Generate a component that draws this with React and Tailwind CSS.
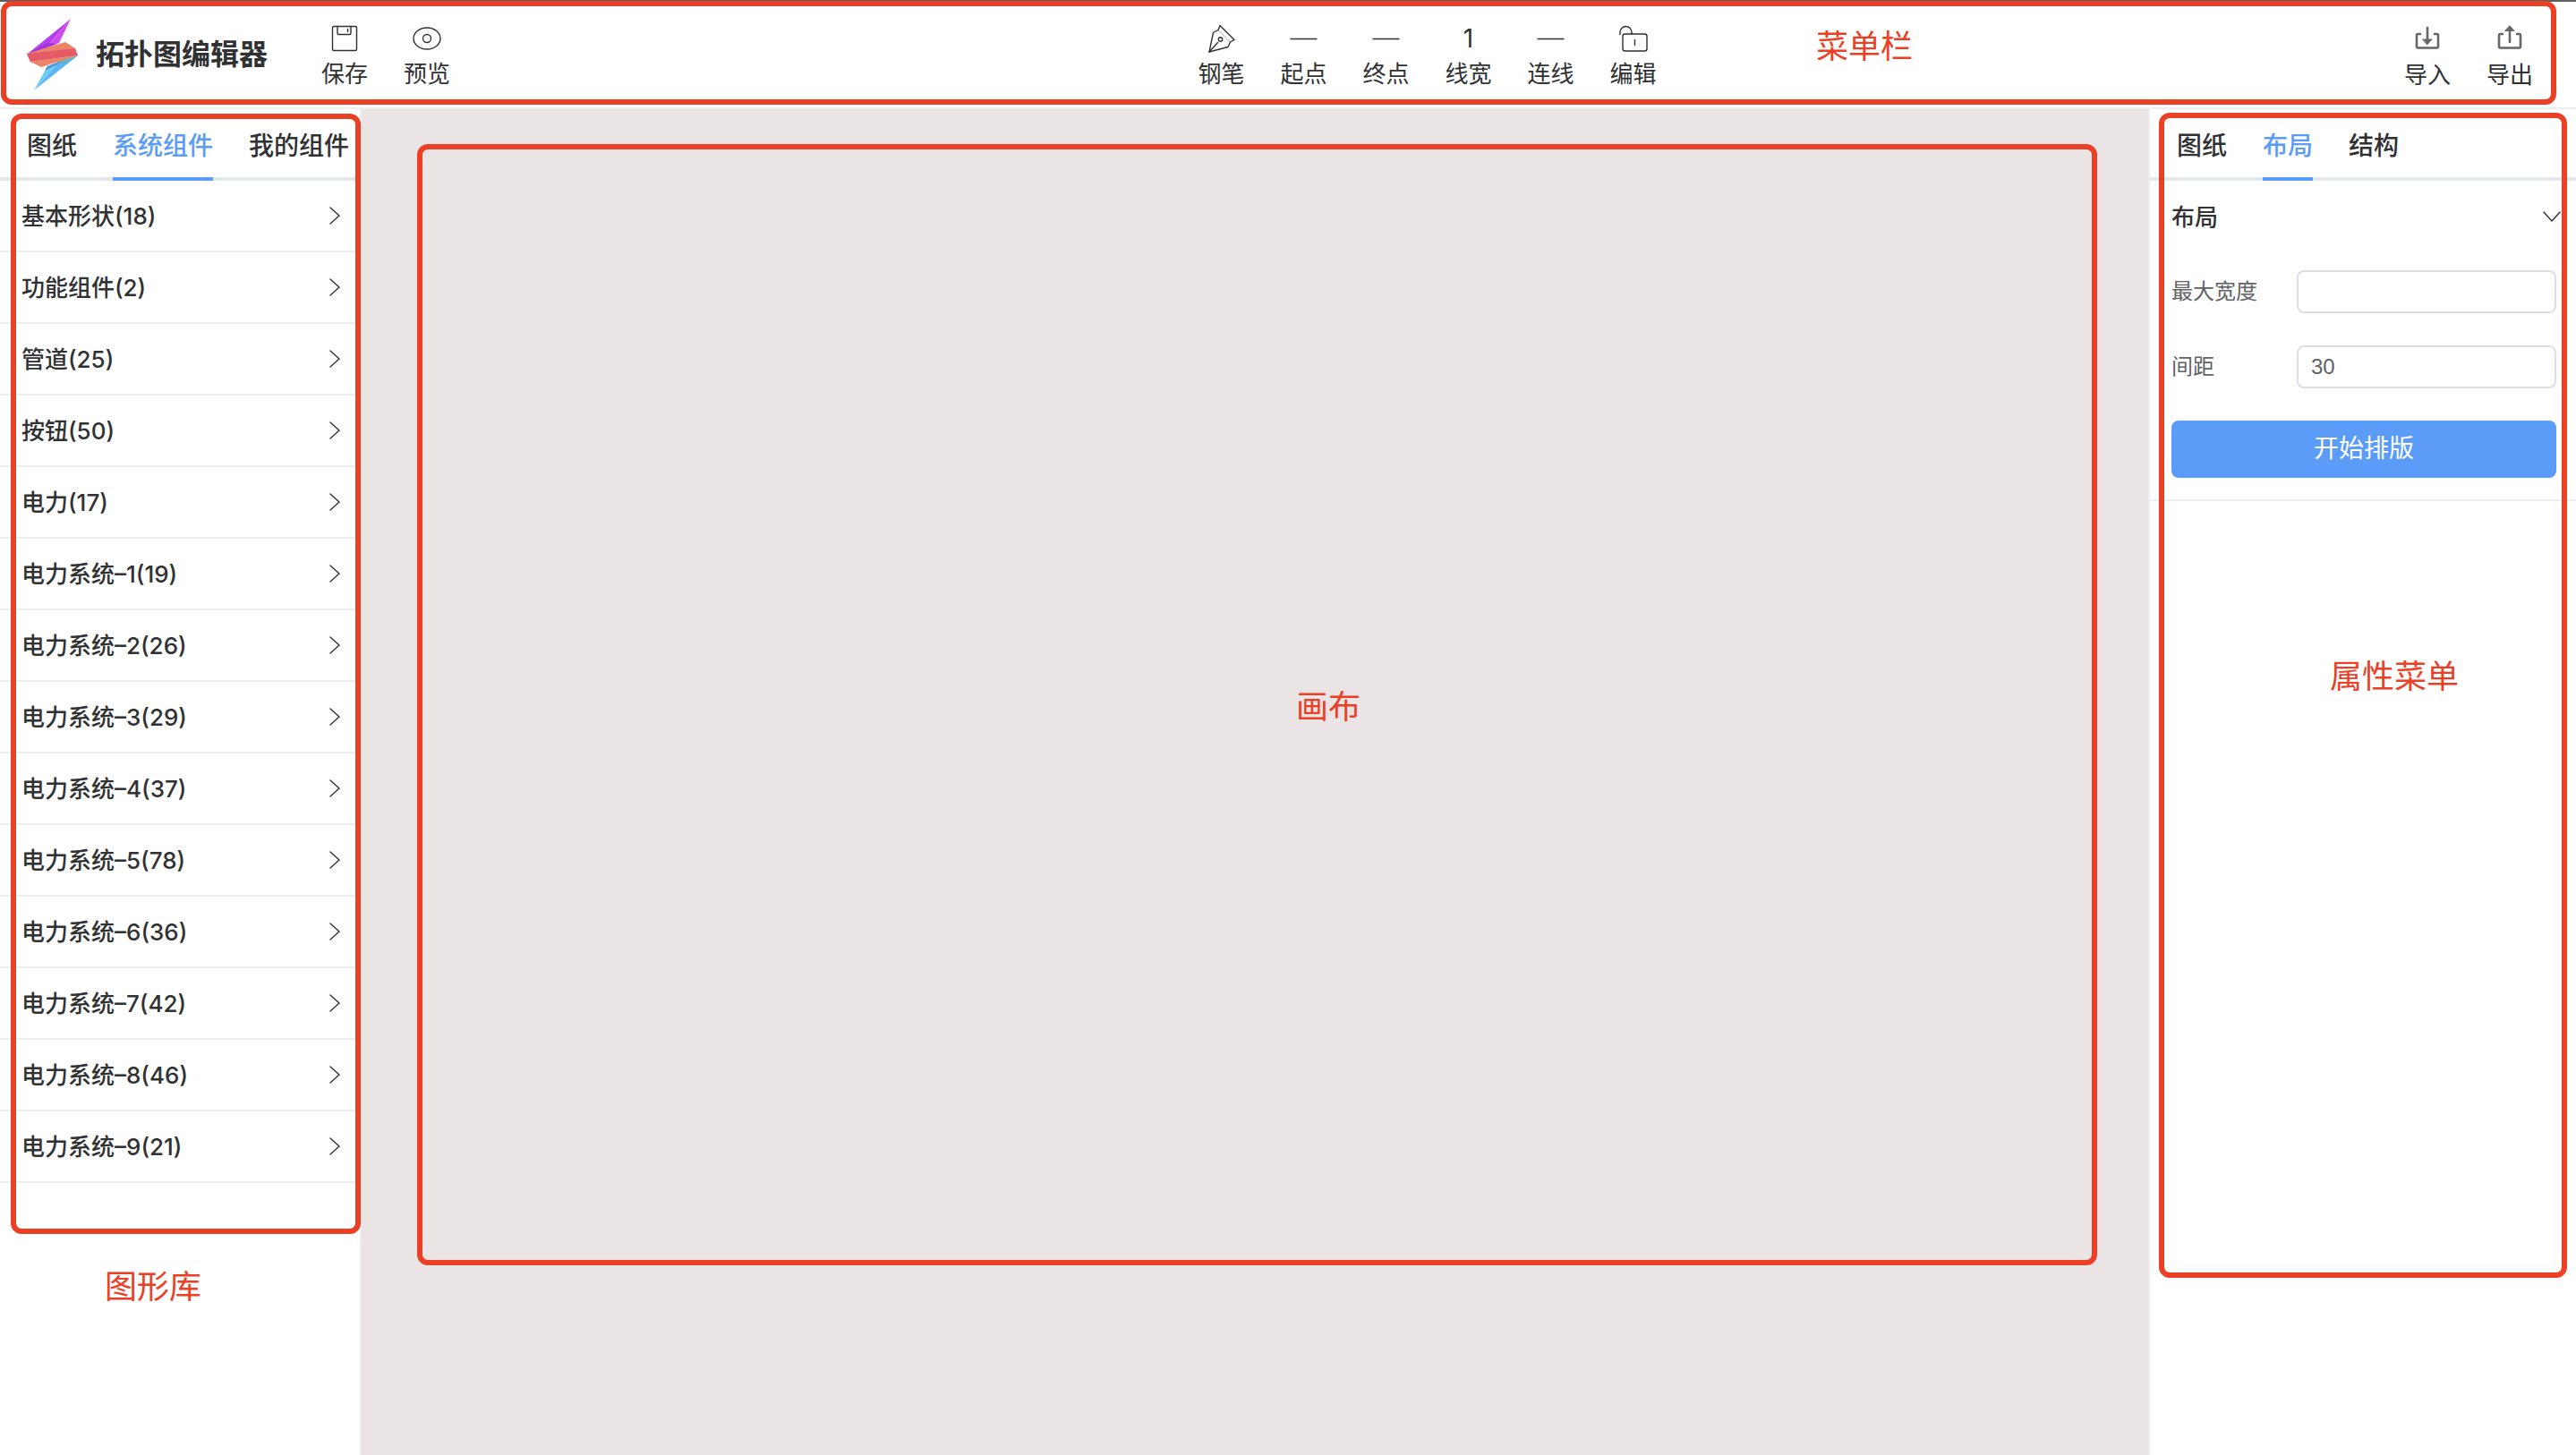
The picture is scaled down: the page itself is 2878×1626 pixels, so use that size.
const TOOL = "flex w-[52px] flex-col items-center pt-1.5 text-[26px] leading-9 text-[#303133]";
const MARK = "pointer-events-none absolute rounded-xl border-6 border-[#eb4025]";
const NOTE = "pointer-events-none absolute text-4xl font-normal whitespace-nowrap text-[#eb4025]";

function Logo() {
  return (
    <svg viewBox="0 0 58 80" className="h-20 w-[58px]" aria-hidden="true">
      <path d="M49 0 L1 39 L20 34 Z" fill="#b53df2" />
      <path d="M49 0 L20 34 L36 27 Z" fill="#cf4df0" />
      <path d="M1 39 L24 27 L33 28 Z" fill="#9a35cf" />
      <path d="M8 80 L57 41 L37 47 Z" fill="#5fb4f7" />
      <path d="M8 80 L23 53 L37 47 Z" fill="#69cdf6" />
      <path d="M57 41 L46 49 L32 52 L35 47 Z" fill="#62b5cc" />
      <path d="M23 53 L40 47 L32 52 L20 58 Z" fill="#4f93dc" />
      <path d="M0 39 L43 26 L54 33 L4 48 Z" fill="#ec8467" />
      <path d="M4 48 L57 41 L16 54 Z" fill="#ec8467" />
      <path d="M0 39 L54 33 L57 41 L4 48 Z" fill="#e45a66" />
    </svg>
  );
}

const stroke = { fill: "none", stroke: "currentColor", strokeWidth: 1.4, strokeLinecap: "round", strokeLinejoin: "round" };

function Icon({ name }) {
  const box = "h-8 w-8";
  if (name === "save")
    return (
      <svg viewBox="0 0 32 32" className={box} {...stroke}>
        <rect x="2.5" y="2.5" width="27" height="27" rx="1.5" />
        <path d="M8 2.5v7.500a1.500 1.500 0 0 0 1.500 1.500h12a1.500 1.500 0 0 0 1.500-1.500V2.500M19.500 5.500v3" />
      </svg>
    );
  if (name === "view")
    return (
      <svg viewBox="0 0 32 32" className={box} {...stroke}>
        <ellipse cx="16" cy="16" rx="15" ry="12" />
        <circle cx="16" cy="16" r="4.500" />
      </svg>
    );
  if (name === "pen")
    return (
      <svg viewBox="0 0 32 32" className={box} {...stroke}>
        <path d="M2 31L6.500 9.500L12 6.500L14 1.500L30 17.500L25.500 20L23 25.500Z" />
        <path d="M2 31L11.500 20.500" />
        <circle cx="14.500" cy="17" r="2.200" />
        <path d="M12 6.500L25.500 20" strokeWidth=".4" />
      </svg>
    );
  if (name === "line")
    return (
      <svg viewBox="0 0 32 32" className={box} {...stroke}>
        <path d="M1 16.500H30" />
      </svg>
    );
  if (name === "unlock")
    return (
      <svg viewBox="0 0 32 32" className={box} {...stroke}>
        <rect x="4" y="11" width="27" height="19" rx="2.500" />
        <path d="M1 11.500V9a6.500 6.500 0 0 1 13 0v2M17.500 17.500v6" />
      </svg>
    );
  if (name === "import")
    return (
      <svg viewBox="0 0 32 32" className={box} {...stroke} strokeWidth="2.600">
        <path d="M8 12H5.500Q4 12 4 13.500V26Q4 27.500 5.500 27.500H26.500Q28 27.500 28 26V13.500Q28 12 26.500 12H24M16 5V22" />
        <path d="M11 18H21L16 23.500Z" fill="currentColor" strokeWidth="1" />
      </svg>
    );
  if (name === "export")
    return (
      <svg viewBox="0 0 32 32" className={box} {...stroke} strokeWidth="2.600">
        <path d="M8 12H5.500Q4 12 4 13.500V26Q4 27.500 5.500 27.500H26.500Q28 27.500 28 26V13.500Q28 12 26.500 12H24M16 21V5" />
        <path d="M11 8.500H21L16 3Z" fill="currentColor" strokeWidth="1" />
      </svg>
    );
  return <span className="flex h-8 items-center text-[28px]">1</span>;
}

function Tool({ icon, label }) {
  return (
    <button type="button" className={TOOL}>
      <Icon name={icon} />
      <span className="mt-1.5">{label}</span>
    </button>
  );
}

function FileTool({ icon, label }) {
  return (
    <button type="button" className={TOOL}>
      <span className="text-[#666666]">
        <Icon name={icon} />
      </span>
      <span className="mt-2">{label}</span>
    </button>
  );
}

function Tabs({ items, active }) {
  return (
    <div role="tablist" className="flex h-20 gap-10 px-[30px] text-[28px] font-medium whitespace-nowrap shadow-[inset_0_-4px_0_#e4e7ed]">
      {items.map((t) => (
        <button
          key={t}
          type="button"
          role="tab"
          aria-selected={t === active}
          className={
            t === active
              ? "h-20 border-b-4 border-[#5a9cf8] pt-1.5 text-[#5a9cf8]"
              : "h-20 border-b-4 border-transparent pt-1.5 text-[#303133]"
          }
        >
          {t}
        </button>
      ))}
    </div>
  );
}

const groups = [
  "基本形状(18)", "功能组件(2)", "管道(25)", "按钮(50)", "电力(17)",
  "电力系统–1(19)", "电力系统–2(26)", "电力系统–3(29)", "电力系统–4(37)", "电力系统–5(78)",
  "电力系统–6(36)", "电力系统–7(42)", "电力系统–8(46)", "电力系统–9(21)",
];

const editTools = [
  ["pen", "钢笔"], ["line", "起点"], ["line", "终点"], ["width", "线宽"], ["line", "连线"], ["unlock", "编辑"],
];

export default function App() {
  return (
    <div className="flex min-h-screen flex-col bg-white font-['Inter','Noto_Sans_CJK_SC',sans-serif] text-[#303133]">
      <header className="relative flex h-[122px] items-center justify-between border-t-2 border-b-2 border-t-[#606060] border-b-[#ededed] pr-12 pl-[30px]">
        <div className="flex items-center">
          <Logo />
          <h1 className="ml-[19px] text-[32px] font-bold">拓扑图编辑器</h1>
          <nav className="ml-[60px] flex gap-10">
            <Tool icon="save" label="保存" />
            <Tool icon="view" label="预览" />
          </nav>
        </div>
        <nav className="flex gap-10">
          {editTools.map(([icon, label]) => (
            <Tool key={label} icon={icon} label={label} />
          ))}
        </nav>
        <nav className="flex gap-10">
          <FileTool icon="import" label="导入" />
          <FileTool icon="export" label="导出" />
        </nav>
        <div className={`${MARK} -top-px right-[22px] bottom-[3px] left-px`} />
        <span className={`${NOTE} top-[30px] right-[741px]`}>菜单栏</span>
      </header>

      <div className="flex flex-1">
        <aside className="relative w-[404px] shrink-0 border-r-2 border-[#eeeeee]">
          <Tabs items={["图纸", "系统组件", "我的组件"]} active="系统组件" />
          <ul>
            {groups.map((g) => (
              <li key={g}>
                <button type="button" className="flex h-20 w-full items-center justify-between border-b-2 border-[#ebeef5] pr-[22px] pl-6 text-[26px] font-medium">
                  {g}
                  <svg viewBox="0 0 12 20" className="h-5 w-3" {...stroke}>
                    <path d="M1 1L11 10L1 19" />
                  </svg>
                </button>
              </li>
            ))}
          </ul>
          <div className={`${MARK} top-[5px] -right-px bottom-[247px] left-3`} />
          <span className={`${NOTE} bottom-[168px] left-[117px]`}>图形库</span>
        </aside>

        <main className="relative flex-1 bg-[#eae4e4]">
          <div className={`${MARK} top-[39px] right-[57px] bottom-[212px] left-[62px]`} />
          <span className={`${NOTE} top-[648px] left-[1044px]`}>画布</span>
        </main>

        <aside className="relative w-[478px] shrink-0 border-l-2 border-[#eeeeee]">
          <Tabs items={["图纸", "布局", "结构"]} active="布局" />
          <section className="border-b-2 border-[#ebeef5] pb-6">
            <button type="button" className="flex h-20 w-full items-center justify-between pr-[17px] pl-6 text-[26px] font-medium">
              布局
              <svg viewBox="0 0 20 12" className="h-3 w-5" {...stroke}>
                <path d="M1 1L10 11L19 1" />
              </svg>
            </button>
            <form className="flex flex-col gap-9 pt-5 pr-[22px] pl-6 text-2xl text-[#606266]">
              <div className="flex items-center">
                <label htmlFor="max-width" className="w-[140px]">最大宽度</label>
                <input id="max-width" type="text" className="h-12 min-w-0 flex-1 rounded-lg border-2 border-[#dcdfe6] px-3.5 font-['Liberation_Sans',sans-serif]" />
              </div>
              <div className="flex items-center">
                <label htmlFor="spacing" className="w-[140px]">间距</label>
                <input id="spacing" type="text" defaultValue="30" className="h-12 min-w-0 flex-1 rounded-lg border-2 border-[#dcdfe6] px-3.5 font-['Liberation_Sans',sans-serif]" />
              </div>
              <button type="button" className="h-16 rounded-lg bg-[#5a9cf8] text-[28px] text-white">开始排版</button>
            </form>
          </section>
          <div className={`${MARK} top-1 right-2.5 bottom-[198px] left-2.5`} />
          <span className={`${NOTE} top-[614px] left-[201px]`}>属性菜单</span>
        </aside>
      </div>
    </div>
  );
}
